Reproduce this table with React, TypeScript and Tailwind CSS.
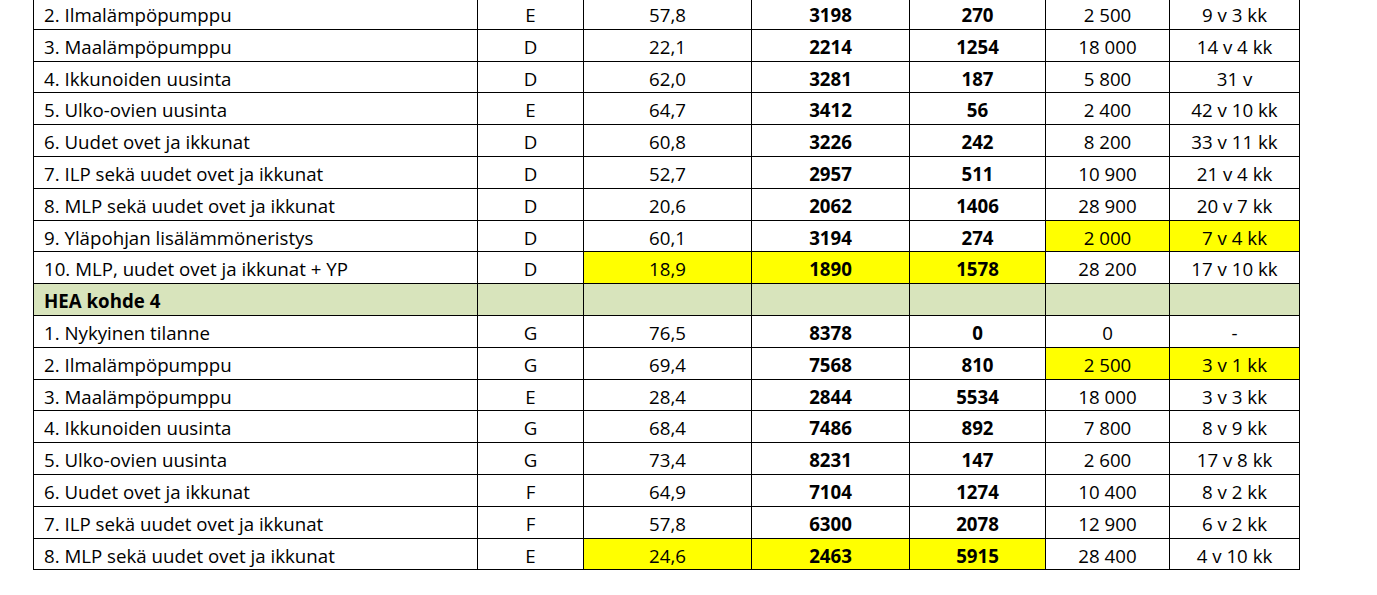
type Row = {
  name: string;
  cls?: string;
  val?: string;
  kwh?: string;
  save?: string;
  cost?: string;
  payback?: string;
  hl?: number[];
  header?: boolean;
};

const rows: Row[] = [
  { name: "2. Ilmalämpöpumppu", cls: "E", val: "57,8", kwh: "3198", save: "270", cost: "2 500", payback: "9 v 3 kk" },
  { name: "3. Maalämpöpumppu", cls: "D", val: "22,1", kwh: "2214", save: "1254", cost: "18 000", payback: "14 v 4 kk" },
  { name: "4. Ikkunoiden uusinta", cls: "D", val: "62,0", kwh: "3281", save: "187", cost: "5 800", payback: "31 v" },
  { name: "5. Ulko-ovien uusinta", cls: "E", val: "64,7", kwh: "3412", save: "56", cost: "2 400", payback: "42 v 10 kk" },
  { name: "6. Uudet ovet ja ikkunat", cls: "D", val: "60,8", kwh: "3226", save: "242", cost: "8 200", payback: "33 v 11 kk" },
  { name: "7. ILP sekä uudet ovet ja ikkunat", cls: "D", val: "52,7", kwh: "2957", save: "511", cost: "10 900", payback: "21 v 4 kk" },
  { name: "8. MLP sekä uudet ovet ja ikkunat", cls: "D", val: "20,6", kwh: "2062", save: "1406", cost: "28 900", payback: "20 v 7 kk" },
  { name: "9. Yläpohjan lisälämmöneristys", cls: "D", val: "60,1", kwh: "3194", save: "274", cost: "2 000", payback: "7 v 4 kk", hl: [5, 6] },
  { name: "10. MLP, uudet ovet ja ikkunat + YP", cls: "D", val: "18,9", kwh: "1890", save: "1578", cost: "28 200", payback: "17 v 10 kk", hl: [2, 3, 4] },
  { name: "HEA kohde 4", header: true },
  { name: "1. Nykyinen tilanne", cls: "G", val: "76,5", kwh: "8378", save: "0", cost: "0", payback: "-" },
  { name: "2. Ilmalämpöpumppu", cls: "G", val: "69,4", kwh: "7568", save: "810", cost: "2 500", payback: "3 v 1 kk", hl: [5, 6] },
  { name: "3. Maalämpöpumppu", cls: "E", val: "28,4", kwh: "2844", save: "5534", cost: "18 000", payback: "3 v 3 kk" },
  { name: "4. Ikkunoiden uusinta", cls: "G", val: "68,4", kwh: "7486", save: "892", cost: "7 800", payback: "8 v 9 kk" },
  { name: "5. Ulko-ovien uusinta", cls: "G", val: "73,4", kwh: "8231", save: "147", cost: "2 600", payback: "17 v 8 kk" },
  { name: "6. Uudet ovet ja ikkunat", cls: "F", val: "64,9", kwh: "7104", save: "1274", cost: "10 400", payback: "8 v 2 kk" },
  { name: "7. ILP sekä uudet ovet ja ikkunat", cls: "F", val: "57,8", kwh: "6300", save: "2078", cost: "12 900", payback: "6 v 2 kk" },
  { name: "8. MLP sekä uudet ovet ja ikkunat", cls: "E", val: "24,6", kwh: "2463", save: "5915", cost: "28 400", payback: "4 v 10 kk", hl: [2, 3, 4] },
];

const App = () => {
  return (
    <div className="w-[1377px] h-[595px] overflow-hidden bg-white text-black font-['Open_Sans',sans-serif] text-[18.7px]">
      <div className="ml-[33px] -mt-[2px] w-[1267px] grid grid-cols-[444px_106px_168px_158px_136px_124px_130px] auto-rows-[31.8px] border-l border-black">
        {rows.map((r, i) => {
          const cells = r.header
            ? [r.name, "", "", "", "", "", ""]
            : [r.name, r.cls, r.val, r.kwh, r.save, r.cost, r.payback];
          return cells.map((c, j) => {
            const yellow = r.hl?.includes(j);
            const bg = r.header ? "bg-[#d8e4bc]" : yellow ? "bg-[#ffff00]" : "bg-white";
            const bold = r.header || j === 3 || j === 4 ? "font-bold" : "";
            const align = j === 0 ? "justify-start pl-[10px]" : "justify-center";
            return (
              <div
                key={`${i}-${j}`}
                className={`flex items-end border-r border-b border-black whitespace-nowrap leading-none h-full ${bg} ${bold} ${align}`}
              >
                <span className="pb-[4px]">{c}</span>
              </div>
            );
          });
        })}
      </div>
    </div>
  );
};

export default App;
